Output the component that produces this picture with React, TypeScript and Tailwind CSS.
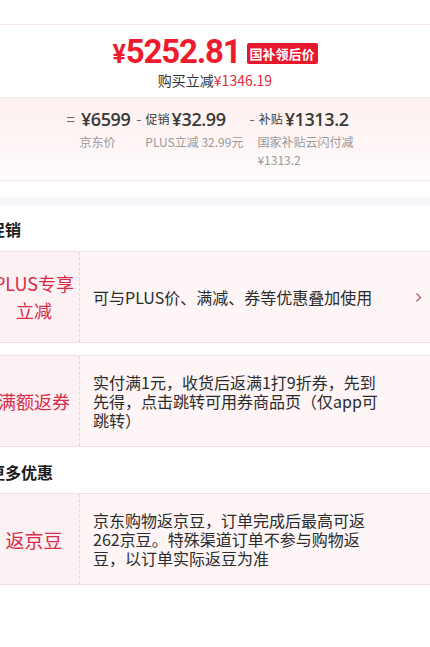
import React from "react";

const rows1 = [
    {
        label: "PLUS专享立减",
        text: "可与PLUS价、满减、券等优惠叠加使用",
        arrow: true,
        size: "text-[18px]",
    },
    {
        label: "满额返券",
        text: "实付满1元，收货后返满1打9折券，先到先得，点击跳转可用券商品页（仅app可跳转）",
        arrow: false,
        size: "text-[18px]",
    },
];

const rows2 = [
    {
        label: "返京豆",
        text: "京东购物返京豆，订单完成后最高可返262京豆。特殊渠道订单不参与购物返豆，以订单实际返豆为准",
        arrow: false,
        size: "text-[19px]",
    },
];

function PromoRow({label, text, arrow, size}: {label: string; text: string; arrow: boolean; size: string}) {
    return (
        <div className="flex h-[92px] border-y border-[#f2dfe4] mb-[12px]">
            <div className={"w-[91px] shrink-0 bg-[#fcf1f3] border-r border-dashed border-[#ead3d9] flex items-center justify-center text-center px-[3px] leading-[27px] text-[#d92c4a] " + size}>
                {label}
            </div>
            <div className="flex-1 bg-[#fdf5f6] flex items-center">
                <div className="w-[299px] pl-[13px] text-[16px] leading-[19px] text-[#2b2b2b]">{text}</div>
                {arrow && (
                    <svg width="7" height="11" viewBox="0 0 7 11" className="ml-[36px]">
                        <path d="M1.5 1.5 L5.5 5.5 L1.5 9.5" fill="none" stroke="#b8566a" strokeWidth="1.3"/>
                    </svg>
                )}
            </div>
        </div>
    );
}

export default function App() {
    return (
        <div className="w-[430px] h-[647px] bg-white overflow-hidden font-['Noto_Sans_CJK_SC',sans-serif]">
            <div className="h-[25px] border-b border-[#f5e5e8]"/>

            {/* price */}
            <div className="h-[72px] flex flex-col items-center pt-[12px]">
                <div className="h-[33px] flex items-center gap-[6px]">
                    <div className="flex items-baseline font-['Roboto',sans-serif] font-bold text-[#ee1b2e] leading-[28px]">
                        <span className="text-[25px]">¥</span>
                        <span className="text-[33px] tracking-[-1.2px]">5252.81</span>
                    </div>
                    <span className="bg-[#e8182c] text-white text-[13px] font-bold leading-[21px] px-[3px] rounded-[2px]">
                        国补领后价
                    </span>
                </div>
                <div className="text-[14px] leading-[18px] mt-[1px] text-[#333]">
                    购买立减<span className="text-[#e02a3c]">¥1346.19</span>
                </div>
            </div>

            {/* breakdown */}
            <div className="h-[84px] border-y border-[#f1e6e7] bg-gradient-to-b from-[#fdf0f0] to-[#fffbfb] flex justify-center gap-[6px] pt-[9px] pr-[6px]">
                <div className="flex flex-col">
                    <div className="flex items-center leading-[24px] text-[#3a3a3a]">
                        <span className="text-[15px] text-[#666] mr-[6px]">=</span>
                        <span className="text-[18px] font-semibold tracking-[-0.4px] font-['Open_Sans',sans-serif]">¥6599</span>
                    </div>
                    <div className="pl-[13px] text-[12px] leading-[18px] text-[#999] mt-[2px]">京东价</div>
                </div>
                <div className="flex flex-col">
                    <div className="flex items-center leading-[24px] text-[#3a3a3a]">
                        <span className="text-[15px] text-[#666] mr-[4px]">-</span>
                        <span className="text-[12px] mr-[2px]">促销</span>
                        <span className="text-[18px] font-semibold tracking-[-0.4px] font-['Open_Sans',sans-serif]">¥32.99</span>
                    </div>
                    <div className="pl-[9px] text-[12px] leading-[18px] text-[#999] mt-[2px]">PLUS立减 32.99元</div>
                </div>
                <div className="flex flex-col">
                    <div className="flex items-center leading-[24px] text-[#3a3a3a]">
                        <span className="text-[15px] text-[#666] mr-[4px]">-</span>
                        <span className="text-[12px] mr-[2px]">补贴</span>
                        <span className="text-[18px] font-semibold tracking-[-0.4px] font-['Open_Sans',sans-serif]">¥1313.2</span>
                    </div>
                    <div className="pl-[8px] w-[108px] text-[12px] leading-[18px] text-[#999] mt-[2px]">国家补贴云闪付减¥1313.2</div>
                </div>
            </div>

            <div className="h-[16px]"/>
            <div className="h-[8px] bg-[#f5f6fa]"/>

            <div className="-ml-[11px]">
                <div className="h-[46px] flex items-center pt-[2px] text-[16px] font-bold text-[#1a1a1a]">促销</div>
                {rows1.map((r) => (
                    <PromoRow key={r.label} {...r}/>
                ))}
                <div className="h-[46px] -mt-[12px] flex items-center pt-[3px] text-[16px] font-bold text-[#1a1a1a]">更多优惠</div>
                {rows2.map((r) => (
                    <PromoRow key={r.label} {...r}/>
                ))}
            </div>
        </div>
    );
}
